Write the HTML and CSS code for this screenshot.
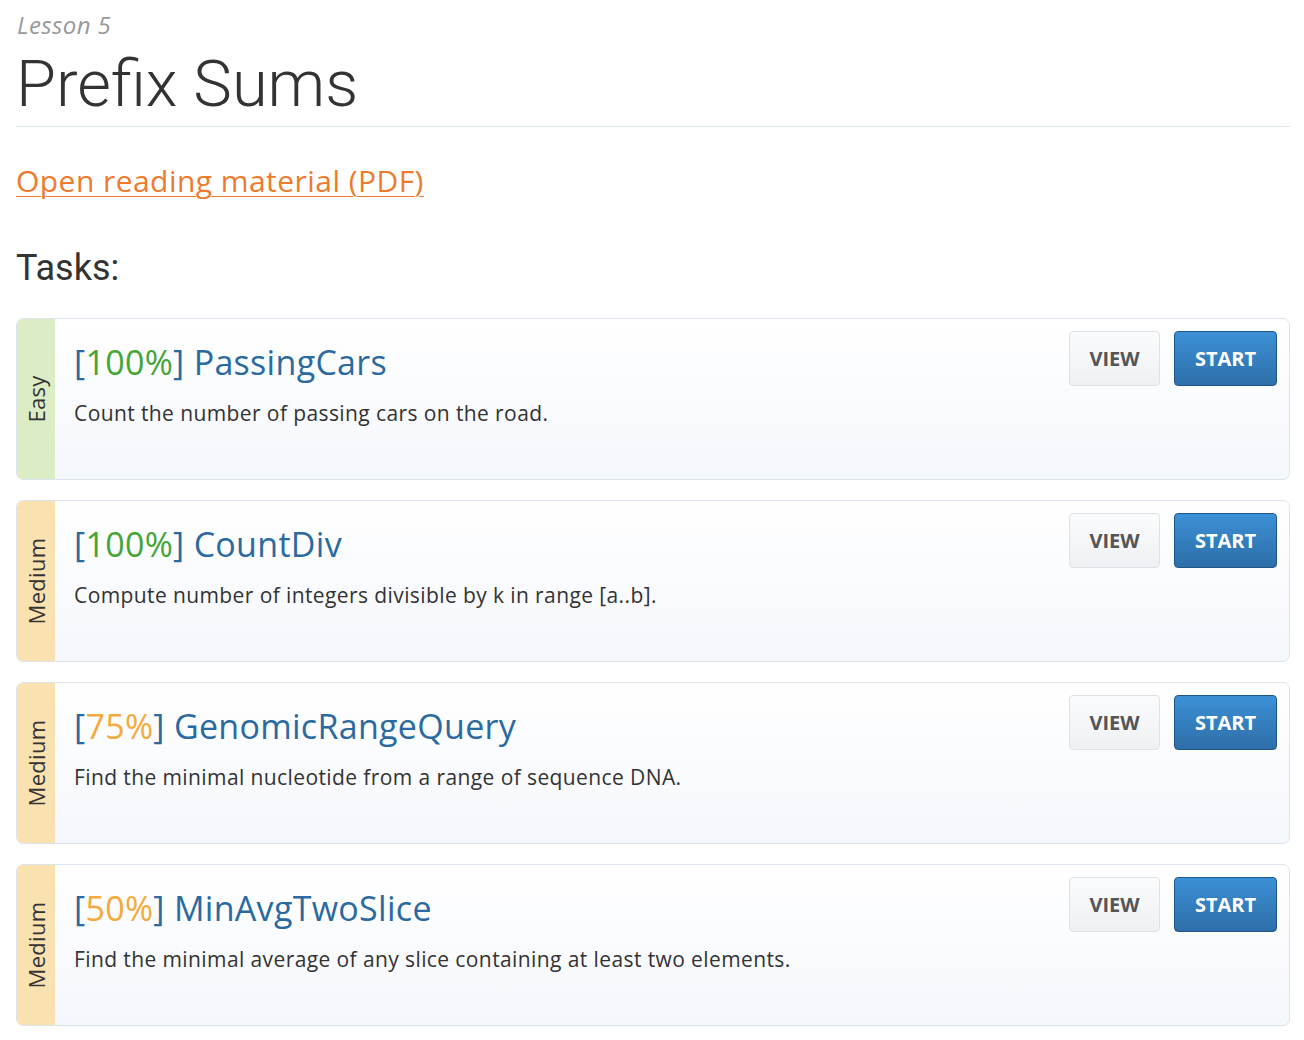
FILE: index.html
```html
<!DOCTYPE html>
<html>
<head>
<meta charset="utf-8">
<link rel="stylesheet" href="styles.css">
</head>
<body>
<div class="page">
  <header class="lesson-header">
    <div class="lesson-num">Lesson 5</div>
    <h1 class="lesson-title">Prefix Sums</h1>
  </header>
  <div class="reading-row"><a class="reading" href="#">Open reading material (PDF)</a></div>
  <h2 class="tasks-heading">Tasks:</h2>
  <div class="tasks">
    <div class="task">
      <div class="level easy"><span>Easy</span></div>
      <div class="task-body">
        <div class="task-title"><span class="br">[</span><span class="pct full">100%</span><span class="br">]</span> PassingCars</div>
        <div class="task-desc">Count the number of passing cars on the road.</div>
      </div>
      <div class="actions"><a class="btn view" href="#">VIEW</a><a class="btn start" href="#">START</a></div>
    </div>
    <div class="task">
      <div class="level medium"><span>Medium</span></div>
      <div class="task-body">
        <div class="task-title"><span class="br">[</span><span class="pct full">100%</span><span class="br">]</span> CountDiv</div>
        <div class="task-desc">Compute number of integers divisible by k in range [a..b].</div>
      </div>
      <div class="actions"><a class="btn view" href="#">VIEW</a><a class="btn start" href="#">START</a></div>
    </div>
    <div class="task">
      <div class="level medium"><span>Medium</span></div>
      <div class="task-body">
        <div class="task-title"><span class="br">[</span><span class="pct part">75%</span><span class="br">]</span> GenomicRangeQuery</div>
        <div class="task-desc">Find the minimal nucleotide from a range of sequence DNA.</div>
      </div>
      <div class="actions"><a class="btn view" href="#">VIEW</a><a class="btn start" href="#">START</a></div>
    </div>
    <div class="task">
      <div class="level medium"><span>Medium</span></div>
      <div class="task-body">
        <div class="task-title"><span class="br">[</span><span class="pct part">50%</span><span class="br">]</span> MinAvgTwoSlice</div>
        <div class="task-desc">Find the minimal average of any slice containing at least two elements.</div>
      </div>
      <div class="actions"><a class="btn view" href="#">VIEW</a><a class="btn start" href="#">START</a></div>
    </div>
  </div>
</div>
</body>
</html>
```

FILE: styles.css
```css
html, body {
  margin: 0;
  padding: 0;
  background: #fff;
}
body {
  font-family: "Open Sans", "Liberation Sans", sans-serif;
  color: #333;
}
.page {
  margin: 0 14px 0 16px;
}
.lesson-header {
  border-bottom: 1px solid #dbe5ec;
  padding-bottom: 2px;
}
.lesson-num {
  font-style: italic;
  font-size: 24px;
  letter-spacing: 0.4px;
  line-height: 24px;
  color: #999;
  padding-top: 13px;
  padding-left: 1px;
}
.lesson-title {
  font-family: Roboto, "Liberation Sans", sans-serif;
  font-weight: 300;
  font-size: 65px;
  line-height: 80px;
  margin: 7px 0 0 0;
  color: #333;
}
.reading-row {
  margin-top: 35px;
  height: 38px;
}
.reading {
  display: inline-block;
  font-size: 30px;
  letter-spacing: 0.45px;
  line-height: 38px;
  color: #ee7a2e;
  text-decoration: underline;
  text-decoration-thickness: 1px;
  text-underline-offset: 4px;
}
.tasks-heading {
  font-family: Roboto, "Liberation Sans", sans-serif;
  font-weight: 400;
  font-size: 36px;
  line-height: 42px;
  margin: 47px 0 0 0;
  color: #333;
}
.tasks {
  margin-top: 29px;
  display: flex;
  flex-direction: column;
  gap: 20px;
}
.task {
  display: flex;
  height: 162px;
  box-sizing: border-box;
  border: 1px solid #dbe4ec;
  border-radius: 7px;
  background: linear-gradient(to bottom, #ffffff, #f4f7fc);
  overflow: hidden;
}
.level {
  width: 38px;
  flex: none;
  display: flex;
  align-items: center;
  justify-content: center;
}
.level span {
  transform: rotate(-90deg);
  font-size: 22px;
  letter-spacing: 0.3px;
  line-height: 22px;
  white-space: nowrap;
  color: #333;
}
.easy {
  background: #dcedc6;
}
.medium {
  background: #f9e1b0;
}
.task-body {
  flex: 1;
  padding: 22px 0 0 19px;
}
.task-title {
  font-size: 34px;
  letter-spacing: 0.3px;
  line-height: 42px;
  color: #2b6aa0;
}
.pct.full {
  color: #46a536;
}
.pct.part {
  color: #f4aa3d;
}
.task-desc {
  margin-top: 16px;
  font-size: 21px;
  letter-spacing: 0.4px;
  line-height: 28px;
  color: #333;
}
.actions {
  display: flex;
  gap: 14px;
  padding: 12px 12px 0 0;
  align-items: flex-start;
}
.btn {
  display: flex;
  align-items: center;
  justify-content: center;
  box-sizing: border-box;
  height: 55px;
  border-radius: 4px;
  font-weight: 700;
  font-size: 20px;
  text-decoration: none;
}
.view {
  width: 91px;
  color: #555;
  background: linear-gradient(to bottom, #fafbfc, #eef1f3);
  border: 1px solid #dce2e7;
}
.start {
  width: 103px;
  color: #fff;
  background: linear-gradient(to bottom, #3c90d6, #2d6ea8);
  border: 1px solid #1f568a;
}
```
